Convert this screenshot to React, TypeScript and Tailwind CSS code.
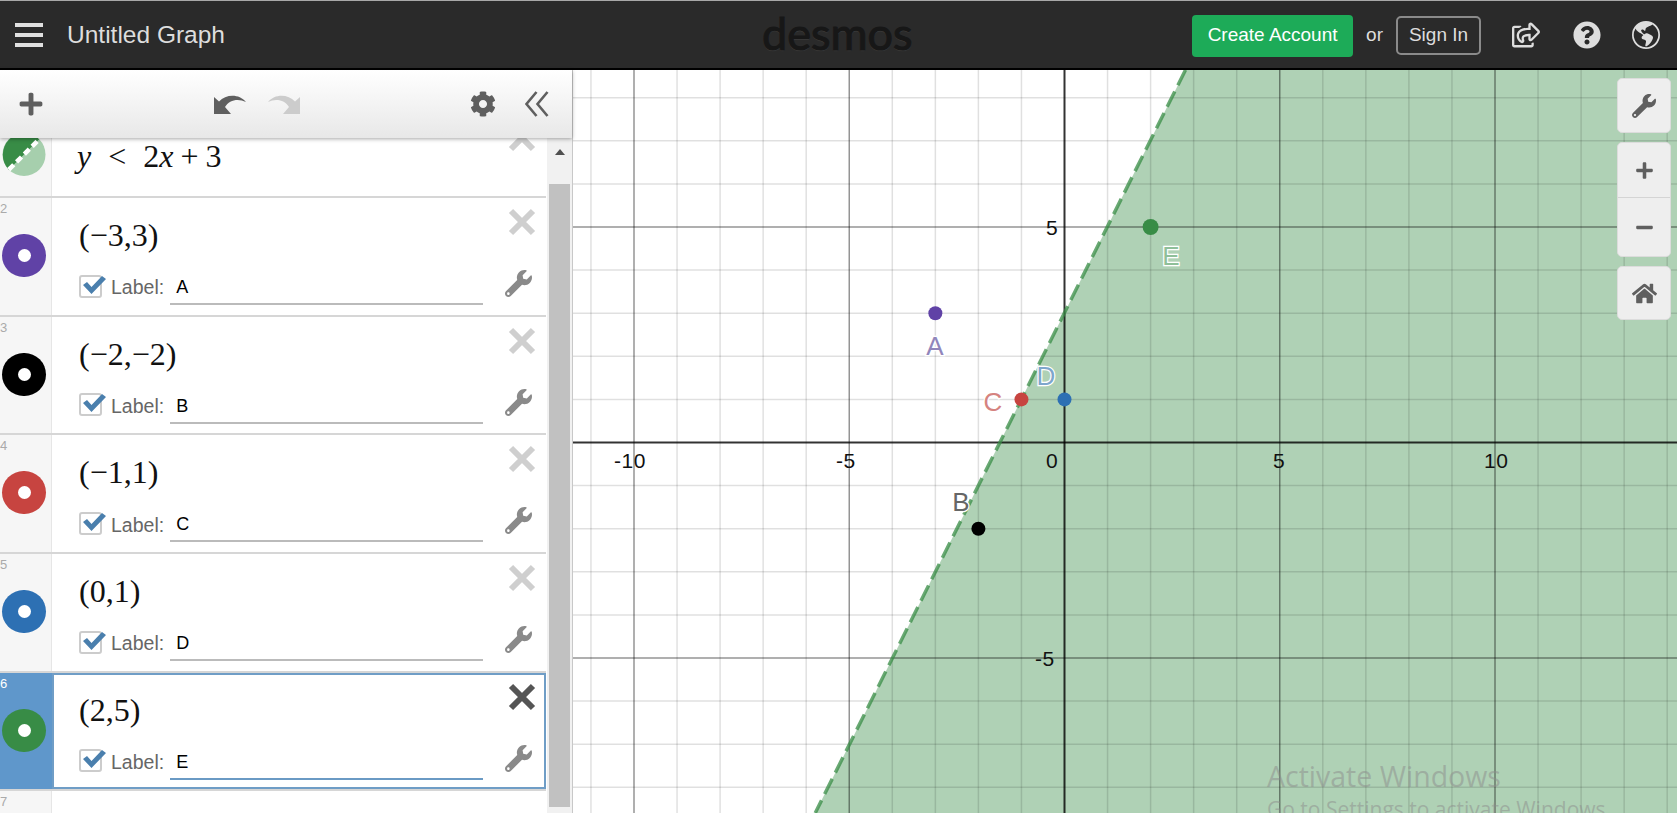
import { FaHome, FaMinus, FaPlus, FaQuestionCircle, FaRegShareSquare, FaWrench, FaCog } from "react-icons/fa";
import { BsGlobeAmericas } from "react-icons/bs";

const sans = "font-['Liberation_Sans',Arial,sans-serif]";

const points = [
  { id: 2, math: "(−3,3)", label: "A", color: "#6042a6" },
  { id: 3, math: "(−2,−2)", label: "B", color: "#000000" },
  { id: 4, math: "(−1,1)", label: "C", color: "#c74440" },
  { id: 5, math: "(0,1)", label: "D", color: "#2d70b3" },
  { id: 6, math: "(2,5)", label: "E", color: "#388c46", selected: true },
];

// graph coordinates
const W = 1104;
const H = 743;
const OX = 491.5;
const OY = 372.5;
const UX = 43.05;
const UY = 43.1;
const sx = (x: number) => OX + x * UX;
const sy = (y: number) => OY - y * UY;

const graphPoints = [
  { x: -3, y: 3, color: "#6042a6", r: 7 },
  { x: -2, y: -2, color: "#000000", r: 7 },
  { x: -1, y: 1, color: "#c74440", r: 7 },
  { x: 0, y: 1, color: "#2d70b3", r: 7 },
  { x: 2, y: 5, color: "#388c46", r: 8 },
];

const pointLabels = [
  { text: "A", x: 362, y: 285, color: "#9186bb" },
  { text: "B", x: 388, y: 441, color: "#666666" },
  { text: "C", x: 420, y: 341, color: "#d5837f" },
  { text: "D", x: 473, y: 315, color: "#7ea6cc" },
  { text: "E", x: 598, y: 195, color: "#8fbf99" },
];

const ticks = [
  { text: "-10", x: 41, y: 398 },
  { text: "-5", x: 263, y: 398 },
  { text: "0", x: 473, y: 398 },
  { text: "5", x: 700, y: 398 },
  { text: "10", x: 911, y: 398 },
  { text: "5", x: 473, y: 165 },
  { text: "-5", x: 462, y: 596 },
];

function range(from: number, to: number) {
  const out: number[] = [];
  for (let i = from; i <= to; i++) out.push(i);
  return out;
}

function CloseIcon({ color }: { color: string }) {
  return (
    <svg width="28" height="28" viewBox="0 0 28 28">
      <path d="M3 3 L25 25 M25 3 L3 25" stroke={color} strokeWidth="6" fill="none" />
    </svg>
  );
}

function Swatch({ color }: { color: string }) {
  return (
    <div className="w-[44px] h-[43px] rounded-full flex items-center justify-center" style={{ backgroundColor: color }}>
      <div className="w-[13px] h-[13px] rounded-full bg-white" />
    </div>
  );
}

function LineSwatch() {
  return (
    <svg width="44" height="43" viewBox="0 0 44 43">
      <circle cx="22" cy="21.5" r="21.5" fill="#a6cfad" />
      <path d="M6.8 36.7 A21.5 21.5 0 0 1 37.2 6.3 Z" fill="#388c46" />
      <path d="M6.8 36.7 L37.2 6.3" stroke="#ffffff" strokeWidth="4.5" strokeDasharray="7 4" />
    </svg>
  );
}

function Row({ id, math, label, color, selected }: { id: number; math: string; label: string; color: string; selected?: boolean }) {
  return (
    <div className="flex h-[118.7px] border-b-2 border-[#d6d6d6]">
      <div className={`w-[52px] shrink-0 border-r ${selected ? "bg-[#5f97cb] border-[#5f97cb]" : "bg-[#f6f6f6] border-[#e6e6e6]"}`}>
        <div className={`h-[36px] pt-[3px] text-[13px] leading-4 ${selected ? "text-white" : "text-[#aaaaaa]"}`}>{id}</div>
        <div className="ml-[2px]">
          <Swatch color={color} />
        </div>
      </div>
      <div className={`flex-1 flex bg-white ${selected ? "shadow-[inset_0_0_0_2px_#6f9dc6]" : ""}`}>
        <div className="w-[431px] pl-[27px] pt-[15px]">
          <div className="h-[44px] flex items-center font-['Liberation_Serif',serif] text-[32px] text-[#111111]">{math}</div>
          <div className="mt-[14px] h-[34px] flex items-center">
            <div className="relative w-[23px] h-[23px] mt-[-4px] rounded-[3px] border-2 border-[#cccccc] bg-white">
              <svg className="absolute left-[1px] top-[-1px]" width="24" height="18" viewBox="0 0 24 18">
                <path d="M1 9 L5 6 L9.5 11 L20 0 L24 3 L9.5 18 Z" fill="#4a7fad" />
              </svg>
            </div>
            <span className="ml-[9px] text-[19.5px] text-[#666666]">Label:</span>
            <div className={`ml-[6px] flex-1 h-[34px] pl-[6px] pt-[5px] text-[18px] leading-[22px] text-black border-b-2 ${selected ? "border-[#6a9ac4]" : "border-[#bbbbbb]"}`}>
              {label}
            </div>
          </div>
        </div>
        <div className="pl-[25px] pt-[10px]">
          <CloseIcon color={selected ? "#555555" : "#cfcfcf"} />
          <div className="mt-[34px] -ml-[3px]">
            <FaWrench className="w-[27px] h-[27px] text-[#8a8a8a]" />
          </div>
        </div>
      </div>
    </div>
  );
}

function Toolbar() {
  return (
    <div className="relative z-10 h-[68px] flex items-center bg-gradient-to-b from-white to-[#e8e8e8] shadow-[0_1px_4px_rgba(0,0,0,0.35)] text-[#5f5f5f]">
      <FaPlus className="ml-[18px] w-[26px] h-[26px]" />
      <svg className="ml-[170px]" width="32" height="19" viewBox="0 0 32 19" fill="#5f5f5f">
        <path d="M0 19 L0 2 L5 6.5 C12 -1 25 -1.5 32 7 C24 3 15 5 11 12 L17 19 Z" />
      </svg>
      <svg className="ml-[22px]" width="32" height="19" viewBox="0 0 32 19" fill="#cccccc">
        <path d="M32 19 L32 2 L27 6.5 C20 -1 7 -1.5 0 7 C8 3 17 5 21 12 L15 19 Z" />
      </svg>
      <FaCog className="ml-[170px] w-[26px] h-[26px]" />
      <svg className="ml-[29px]" width="24" height="26" viewBox="0 0 24 26" fill="none" stroke="#5f5f5f" strokeWidth="2.6">
        <path d="M11.5 1 L1.5 13 L11.5 25 M22.5 1 L12.5 13 L22.5 25" />
      </svg>
    </div>
  );
}

function Scrollbar() {
  return (
    <div className="w-[26px] shrink-0 bg-[#f1f1f1] border-l border-white pt-[11px] flex flex-col items-center">
      <div className="h-[6px] w-0 border-x-[5px] border-x-transparent border-b-[6px] border-b-[#505050]" />
      <div className="mt-[29px] w-[21px] h-[623px] bg-[#c1c1c1]" />
    </div>
  );
}

function ExpressionPanel() {
  return (
    <aside className="w-[573px] shrink-0 flex flex-col border-r border-[#c8c8c8] bg-white">
      <Toolbar />
      <div className="flex-1 flex min-h-0">
        <div className="w-[546px] overflow-hidden">
          <div className="-mt-[24px]">
            <div className="flex h-[84px] border-b-2 border-[#d6d6d6]">
              <div className="w-[52px] shrink-0 bg-[#f6f6f6] border-r border-[#e6e6e6] pl-[2px] pt-[19px]">
                <LineSwatch />
              </div>
              <div className="flex-1 flex bg-white">
                <div className="w-[431px] pl-[25px] pt-[26px] flex items-start font-['Liberation_Serif',serif] text-[32px] leading-[32px] text-[#111111]">
                  <i className="mr-[17px]">y</i>
                  <span className="mr-[17px]">&lt;</span>
                  <span>2</span>
                  <i>x</i>
                  <span className="mx-[7px]">+</span>
                  <span>3</span>
                </div>
                <div className="pl-[25px] pt-[10px]">
                  <CloseIcon color="#cfcfcf" />
                </div>
              </div>
            </div>
            {points.map((p) => (
              <Row key={p.id} {...p} />
            ))}
            <div className="flex h-[30px]">
              <div className="w-[52px] bg-[#f6f6f6] border-r border-[#e6e6e6] pt-[3px] text-[13px] leading-4 text-[#aaaaaa]">7</div>
            </div>
          </div>
        </div>
        <Scrollbar />
      </div>
    </aside>
  );
}

function GraphCanvas() {
  return (
    <svg className="block" width={W} height={H} viewBox={`0 0 ${W} ${H}`}>
      <polygon points={`${sx(2.81)},0 ${sx(-5.79)},${H} ${W},${H} ${W},0`} fill="#388c46" fillOpacity="0.4" />
      {range(-11, 14).map((i) => (
        <line key={`v${i}`} x1={sx(i)} x2={sx(i)} y1={0} y2={H} stroke="#000" strokeOpacity={i === 0 ? 0.8 : i % 5 === 0 ? 0.42 : 0.12} strokeWidth={i === 0 ? 2 : 1.5} />
      ))}
      {range(-9, 9).map((i) => (
        <line key={`h${i}`} x1={0} x2={W} y1={sy(i)} y2={sy(i)} stroke="#000" strokeOpacity={i === 0 ? 0.8 : i % 5 === 0 ? 0.42 : 0.12} strokeWidth={i === 0 ? 2 : 1.5} />
      ))}
      <line x1={sx(2.81)} y1={0} x2={sx(-5.79)} y2={H} stroke="#388c46" strokeOpacity="0.75" strokeWidth="3.5" strokeDasharray="17 7" />
      {ticks.map((t) => (
        <text key={t.text + t.x + t.y} x={t.x} y={t.y} fontFamily="'Liberation Sans', Arial, sans-serif" fontSize="21" fill="#111" letterSpacing="0.5">
          {t.text}
        </text>
      ))}
      {graphPoints.map((p) => (
        <circle key={p.x} cx={sx(p.x)} cy={sy(p.y)} r={p.r} fill={p.color} />
      ))}
      {pointLabels.map((l) => (
        <text key={l.text} x={l.x} y={l.y} textAnchor="middle" fontFamily="'Liberation Sans', Arial, sans-serif" fontSize="26" fill={l.color} stroke="#ffffff" strokeWidth="2.5" paintOrder="stroke">
          {l.text}
        </text>
      ))}
    </svg>
  );
}

function GraphButtons() {
  return (
    <div className="absolute right-[6px] top-[8px] flex flex-col gap-[9px] text-[#5f5f5f]">
      <div className="w-[54px] h-[55px] rounded-[5px] bg-[#eeeeee] border border-[#dcdcdc] flex items-center justify-center">
        <FaWrench className="w-[24px] h-[24px]" />
      </div>
      <div className="w-[54px] rounded-[5px] bg-[#eeeeee] border border-[#dcdcdc]">
        <div className="h-[55px] flex items-center justify-center border-b border-[#d4d4d4]">
          <FaPlus className="w-[19px] h-[19px]" />
        </div>
        <div className="h-[58px] flex items-center justify-center">
          <FaMinus className="w-[19px] h-[19px]" />
        </div>
      </div>
      <div className="w-[54px] h-[54px] rounded-[5px] bg-[#eeeeee] border border-[#dcdcdc] flex items-center justify-center">
        <FaHome className="w-[25px] h-[25px]" />
      </div>
    </div>
  );
}

function Watermark() {
  return (
    <div className="absolute left-[694px] top-[691px] whitespace-nowrap font-['Open_Sans',sans-serif] text-[#8c8c8c]/50">
      <div className="text-[28.5px] leading-[30px]">Activate Windows</div>
      <div className="mt-[5px] text-[21px] leading-[26px]">Go to Settings to activate Windows.</div>
    </div>
  );
}

function Header() {
  return (
    <header className="relative h-[70px] shrink-0 flex items-center bg-[#2a2a2a] border-t border-[#a8a8a8] border-b-2 border-b-black">
      <div className="ml-[15px] w-[28px] flex flex-col gap-[6px]">
        <div className="h-[4px] bg-[#e0e0e0]" />
        <div className="h-[4px] bg-[#e0e0e0]" />
        <div className="h-[4px] bg-[#e0e0e0]" />
      </div>
      <span className="ml-[24px] mt-[2px] text-[24.5px] text-[#dddddd]">Untitled Graph</span>
      <span className="absolute left-[762px] top-[5px] font-['Lato',sans-serif] text-[45px] leading-[54px] text-[#171717] [-webkit-text-stroke:1.2px_#171717] [text-shadow:0_1px_1px_rgba(255,255,255,0.12)]">
        desmos
      </span>
      <div className="ml-auto mt-[2px] flex items-center text-[19px]">
        <div className="w-[161px] h-[42px] rounded-[4px] bg-[#1dab58] text-white flex items-center justify-center">Create Account</div>
        <span className="ml-[13px] text-[#dddddd]">or</span>
        <div className="ml-[13px] w-[85px] h-[39px] rounded-[5px] border-2 border-[#8a8a8a] text-[#dddddd] flex items-center justify-center">Sign In</div>
        <FaRegShareSquare className="ml-[31px] w-[28px] h-[26px] -mt-[2px] text-[#dddddd]" />
        <FaQuestionCircle className="ml-[33px] w-[28px] h-[28px] -mt-[2px] text-[#dddddd]" />
        <BsGlobeAmericas className="ml-[31px] mr-[17px] w-[28px] h-[28px] -mt-[2px] text-[#dddddd]" />
      </div>
    </header>
  );
}

export default function App() {
  return (
    <div className={`w-[1677px] h-[813px] overflow-hidden flex flex-col bg-white ${sans}`}>
      <Header />
      <div className="flex-1 flex min-h-0">
        <ExpressionPanel />
        <main className="relative flex-1 overflow-hidden">
          <GraphCanvas />
          <GraphButtons />
          <Watermark />
        </main>
      </div>
    </div>
  );
}
